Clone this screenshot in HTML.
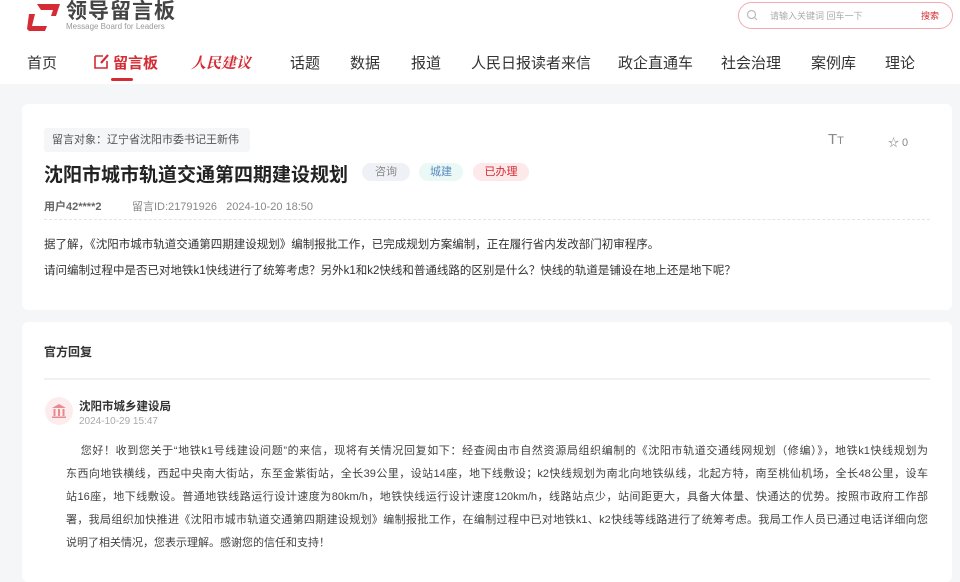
<!DOCTYPE html>
<html><head><meta charset="utf-8"><style>
*{margin:0;padding:0;box-sizing:border-box}
body{width:960px;height:558px;overflow:hidden;background:#f5f6f8;font-family:"Liberation Sans","Noto Sans CJK SC",sans-serif;color:#333;position:relative}
.hdr{position:absolute;left:0;top:0;width:960px;height:84px;background:#fff}
.abs{position:absolute;white-space:nowrap}
.nav{position:absolute;top:52px;font-size:15px;color:#333}
.card{position:absolute;background:#fff;border-radius:6px}
.tag{position:absolute;top:163px;height:18px;border-radius:9px;font-size:11px;line-height:18px;text-align:center;width:48px}
.j{text-align:justify;text-align-last:justify;display:block;height:23px;white-space:nowrap;overflow:hidden}
</style></head><body>
<div class="hdr">
 <svg class="abs" style="left:27px;top:2px" width="34" height="30" viewBox="0 0 34 30"><path d="M10 2 H33 L29 14 H24 L26 8 H14 Z" fill="#d42b34"/><path d="M2 12 H8 L5 24 H20 L18 29 H2 L0 27 Z M8 12 L12 2" fill="#d42b34"/></svg>
 <div class="abs" style="left:66px;top:1px;font-size:21px;line-height:21px;font-weight:bold;color:#444;letter-spacing:1px">领导留言板</div>
 <div class="abs" style="left:66px;top:23px;font-size:8px;line-height:8px;color:#999">Message Board for Leaders</div>
 <div class="abs" style="left:738px;top:2px;width:215px;height:27px;border:1px solid #f2aaaf;border-radius:14px"></div>
 <svg class="abs" style="left:746px;top:9px" width="12" height="12" viewBox="0 0 12 12"><circle cx="5.5" cy="5.5" r="4" fill="none" stroke="#bbb" stroke-width="1.2"/><path d="M8.5 8.5 L11 11" stroke="#bbb" stroke-width="1.2"/></svg>
 <div class="abs" style="left:770px;top:9px;font-size:9px;color:#aaa">请输入关键词 回车一下</div>
 <div class="abs" style="left:921px;top:9px;font-size:9px;color:#d42b34">搜索</div>
 <div class="nav" style="left:27px">首页</div>
 <svg class="abs" style="left:94px;top:53px" width="16" height="16" viewBox="0 0 16 16"><path d="M1 3 H9 M1 3 V15 H13 V8" fill="none" stroke="#d42b34" stroke-width="1.6"/><path d="M7 10 L14 2" stroke="#d42b34" stroke-width="2.2"/></svg>
 <div class="nav" style="left:113px;color:#d42b34;font-weight:bold">留言板</div>
 <div class="abs" style="left:111px;top:78px;width:22px;height:3px;background:#d42b34;border-radius:2px"></div>
 <div class="nav" style="left:191px;color:#d42b34;font-style:italic;font-weight:bold;font-family:'Noto Serif CJK SC',serif">人民建议</div>
 <div class="nav" style="left:290px">话题</div>
 <div class="nav" style="left:350px">数据</div>
 <div class="nav" style="left:411px">报道</div>
 <div class="nav" style="left:471px">人民日报读者来信</div>
 <div class="nav" style="left:618px">政企直通车</div>
 <div class="nav" style="left:721px">社会治理</div>
 <div class="nav" style="left:811px">案例库</div>
 <div class="nav" style="left:885px">理论</div>
</div>
<div class="card" style="left:22px;top:104px;width:930px;height:206px"></div>
<div class="abs" style="left:44px;top:128px;width:206px;height:24px;background:#f5f6f8;border-radius:3px;font-size:11px;color:#555;line-height:24px;padding-left:8px">留言对象：辽宁省沈阳市委书记王新伟</div>
<div class="abs" style="left:44px;top:160px;font-size:19px;font-weight:bold;color:#222">沈阳市城市轨道交通第四期建设规划</div>
<div class="tag" style="left:362px;background:#eef1f6;color:#888">咨询</div>
<div class="tag" style="left:419px;background:#eaf8f6;color:#5a8ac0;width:44px">城建</div>
<div class="tag" style="left:473px;background:#fde8ea;color:#d42b34;width:56px">已办理</div>
<div class="abs" style="left:44px;top:198px;font-size:11px;color:#666;font-weight:bold">用户42****2</div>
<div class="abs" style="left:132px;top:198px;font-size:11px;color:#888">留言ID:21791926&nbsp;&nbsp;&nbsp;2024-10-20 18:50</div>
<div class="abs" style="left:828px;top:131px;font-size:15px;color:#888">T<span style="font-size:11px">T</span></div>
<div class="abs" style="left:888px;top:134px;font-size:11px;color:#888">☆ 0</div>
<div class="abs" style="left:44px;top:219px;width:886px;border-top:1px dashed #e4e4e4"></div>
<div class="abs" style="left:44px;top:232px;font-size:11.5px;color:#333;line-height:26px">据了解，《沈阳市城市轨道交通第四期建设规划》编制报批工作，已完成规划方案编制，正在履行省内发改部门初审程序。<br>请问编制过程中是否已对地铁k1快线进行了统筹考虑？另外k1和k2快线和普通线路的区别是什么？快线的轨道是铺设在地上还是地下呢？</div>
<div class="card" style="left:22px;top:322px;width:930px;height:260px"></div>
<div class="abs" style="left:44px;top:343px;font-size:12px;font-weight:bold;color:#333">官方回复</div>
<div class="abs" style="left:44px;top:378px;width:886px;border-top:2px solid #f0f1f3"></div>
<div class="abs" style="left:45px;top:397px;width:28px;height:28px;border-radius:14px;background:#fdecee"></div>
<svg class="abs" style="left:51px;top:403px" width="16" height="16" viewBox="0 0 16 16" fill="#e88a8f"><path d="M8 1 L15 5 H1 Z"/><rect x="2.5" y="6" width="2" height="7"/><rect x="7" y="6" width="2" height="7"/><rect x="11.5" y="6" width="2" height="7"/><rect x="1" y="13.5" width="14" height="1.5"/></svg>
<div class="abs" style="left:79px;top:398px;font-size:11.5px;font-weight:bold;color:#333">沈阳市城乡建设局</div>
<div class="abs" style="left:79px;top:416px;font-size:10px;color:#aaa">2024-10-29 15:47</div>
<div class="abs" style="left:66px;top:440px;width:862px;font-size:11px;color:#444;line-height:23px;white-space:normal">
<span class="j">&nbsp;&nbsp;&nbsp;&nbsp;您好！收到您关于“地铁k1号线建设问题”的来信，现将有关情况回复如下：经查阅由市自然资源局组织编制的《沈阳市轨道交通线网规划（修编）》，地铁k1快线规划为</span>
<span class="j">东西向地铁横线，西起中央南大街站，东至金紫街站，全长39公里，设站14座，地下线敷设；k2快线规划为南北向地铁纵线，北起方特，南至桃仙机场，全长48公里，设车</span>
<span class="j">站16座，地下线敷设。普通地铁线路运行设计速度为80km/h，地铁快线运行设计速度120km/h，线路站点少，站间距更大，具备大体量、快通达的优势。按照市政府工作部</span>
<span class="j">署，我局组织加快推进《沈阳市城市轨道交通第四期建设规划》编制报批工作，在编制过程中已对地铁k1、k2快线等线路进行了统筹考虑。我局工作人员已通过电话详细向您</span>
<span style="display:block">说明了相关情况，您表示理解。感谢您的信任和支持！</span>
</div>
</body></html>
